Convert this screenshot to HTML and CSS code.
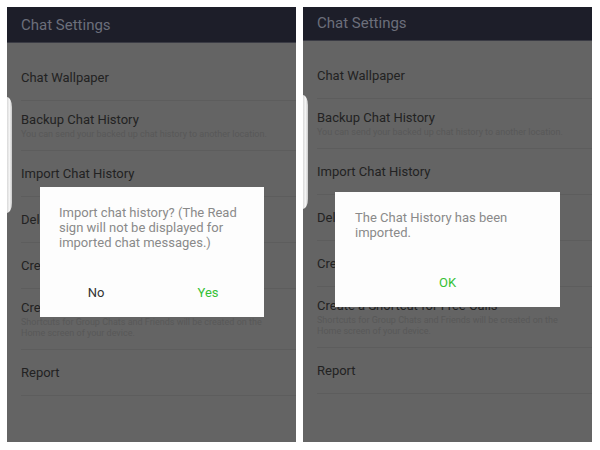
FILE: index.html
```html
<!DOCTYPE html>
<html>
<head>
<meta charset="utf-8">
<link rel="stylesheet" href="styles.css">
</head>
<body>
<div class="screens">
  <section class="phone">
    <header class="bar">Chat Settings</header>
    <ul class="list">
      <li class="row"><span class="title">Chat Wallpaper</span></li>
      <li class="row"><span class="title">Backup Chat History</span><span class="sub">You can send your backed up chat history to another location.</span></li>
      <li class="row"><span class="title">Import Chat History</span></li>
      <li class="row"><span class="title">Delete All Chat History</span></li>
      <li class="row"><span class="title">Create Chat Shortcuts</span></li>
      <li class="row"><span class="title">Create a Shortcut for Free Calls</span><span class="sub">Shortcuts for Group Chats and Friends will be created on the Home screen of your device.</span></li>
      <li class="row"><span class="title">Report</span></li>
    </ul>
    <div class="bezel"></div>
    <div class="dialog dialog-confirm">
      <p class="msg">Import chat history? (The Read sign will not be displayed for imported chat messages.)</p>
      <div class="actions">
        <span class="btn">No</span>
        <span class="btn btn-green">Yes</span>
      </div>
    </div>
  </section>
  <section class="phone phone-b">
    <header class="bar">Chat Settings</header>
    <ul class="list">
      <li class="row"><span class="title">Chat Wallpaper</span></li>
      <li class="row"><span class="title">Backup Chat History</span><span class="sub">You can send your backed up chat history to another location.</span></li>
      <li class="row"><span class="title">Import Chat History</span></li>
      <li class="row"><span class="title">Delete All Chat History</span></li>
      <li class="row"><span class="title">Create Chat Shortcuts</span></li>
      <li class="row"><span class="title">Create a Shortcut for Free Calls</span><span class="sub">Shortcuts for Group Chats and Friends will be created on the Home screen of your device.</span></li>
      <li class="row"><span class="title">Report</span></li>
    </ul>
    <div class="bezel"></div>
    <div class="dialog dialog-done">
      <p class="msg">The Chat History has been imported.</p>
      <div class="actions">
        <span class="btn btn-green">OK</span>
      </div>
    </div>
  </section>
</div>
</body>
</html>
```

FILE: styles.css
```css
* { box-sizing: border-box; }
html, body { margin: 0; padding: 0; background: #ffffff; }
body { font-family: Roboto, "Noto Sans", sans-serif; }

.screens {
  display: flex;
  gap: 7px;
  padding: 7px 0 0 7px;
}

.phone {
  position: relative;
  width: 289px;
  height: 435px;
  background: #646464;
  overflow: hidden;
}

.bar {
  height: 36px;
  background: #1d1e29;
  color: #6c6f7b;
  font-size: 15px;
  line-height: 36px;
  padding-left: 14px;
  border-bottom: 1px solid #3a3b44;
}
.phone-b .bar { height: 34px; line-height: 33px; }

.list {
  list-style: none;
  margin: 0;
  padding: 12px 0 0 0;
}

.row {
  display: flex;
  flex-direction: column;
  justify-content: center;
  min-height: 46px;
  padding: 10px 0;
  margin-left: 14px;
  border-bottom: 1px solid #5d5d5d;
}

.title {
  font-size: 13px;
  line-height: 18px;
  color: #222222;
  white-space: nowrap;
}

.sub {
  font-size: 9px;
  line-height: 11px;
  color: #585858;
  padding-right: 10px;
}

.bezel {
  position: absolute;
  left: 0;
  top: 90px;
  width: 5px;
  height: 116px;
  background: linear-gradient(to right, #d8d8d8, #f4f4f4 50%, #c9c9c9);
  border-radius: 0 6px 6px 0 / 0 12px 12px 0;
}
.phone-b .bezel { top: 88px; height: 114px; }

.dialog {
  position: absolute;
  background: #fdfdfd;
  display: flex;
  flex-direction: column;
}
.dialog-confirm { left: 33px; top: 180px; width: 224px; height: 130px; padding: 18px 19px 0 19px; }
.dialog-done { left: 32px; top: 185px; width: 225px; height: 115px; padding: 18px 20px 0 20px; }

.msg {
  margin: 0;
  font-size: 13px;
  line-height: 15px;
  color: #8a8a8a;
}

.actions {
  margin-top: auto;
  height: 50px;
  display: flex;
  margin-left: -19px;
  margin-right: -19px;
}
.dialog-done .actions { margin-left: -20px; margin-right: -20px; }

.btn {
  flex: 1;
  display: flex;
  align-items: center;
  justify-content: center;
  font-size: 13px;
  color: #333333;
}
.btn-green { color: #35c135; }
```
